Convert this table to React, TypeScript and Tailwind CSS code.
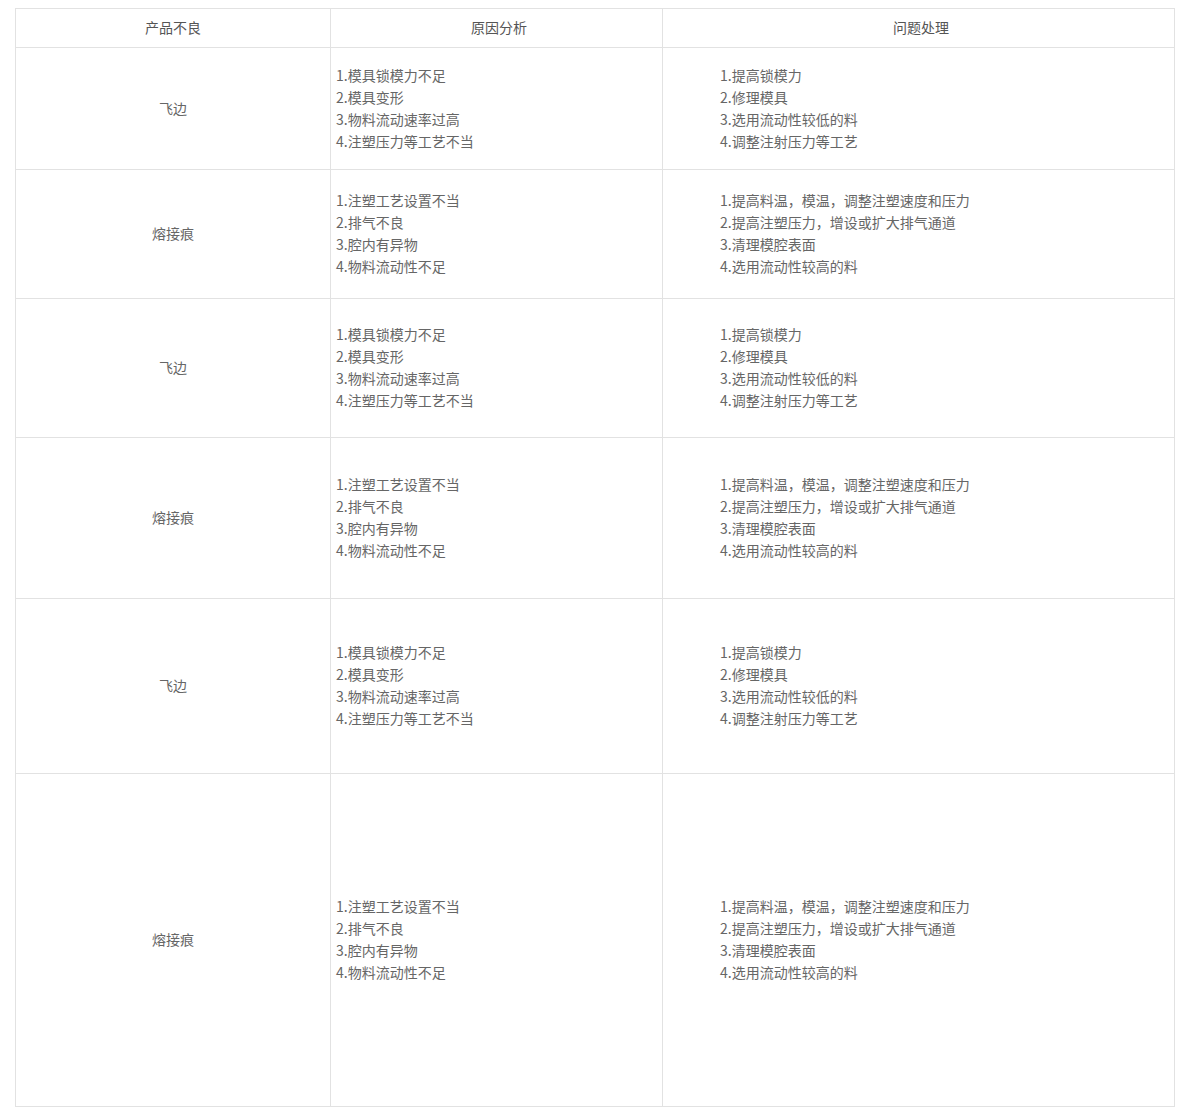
import React from "react";

const causeA = ["1.模具锁模力不足", "2.模具变形", "3.物料流动速率过高", "4.注塑压力等工艺不当"];
const fixA = ["1.提高锁模力", "2.修理模具", "3.选用流动性较低的料", "4.调整注射压力等工艺"];
const causeB = ["1.注塑工艺设置不当", "2.排气不良", "3.腔内有异物", "4.物料流动性不足"];
const fixB = ["1.提高料温，模温，调整注塑速度和压力", "2.提高注塑压力，增设或扩大排气通道", "3.清理模腔表面", "4.选用流动性较高的料"];

const rows: { name: string; cause: string[]; fix: string[]; h: string }[] = [
  { name: "飞边", cause: causeA, fix: fixA, h: "h-[122px]" },
  { name: "熔接痕", cause: causeB, fix: fixB, h: "h-[129px]" },
  { name: "飞边", cause: causeA, fix: fixA, h: "h-[139px]" },
  { name: "熔接痕", cause: causeB, fix: fixB, h: "h-[161px]" },
  { name: "飞边", cause: causeA, fix: fixA, h: "h-[175px]" },
  { name: "熔接痕", cause: causeB, fix: fixB, h: "h-[333px]" },
];

export default function App() {
  return (
    <div className="bg-white min-h-[1117px] pt-[8px] pl-[15px] text-[14px] leading-[22px] text-[#666]" style={{ fontFamily: '"Microsoft YaHei", "Noto Sans CJK SC", sans-serif' }}>
      <table className="border-collapse w-[1159px] table-fixed">
        <colgroup>
          <col className="w-[315px]" />
          <col className="w-[332px]" />
          <col className="w-[512px]" />
        </colgroup>
        <thead>
          <tr className="h-[39px]">
            <th className="border border-[#e2e2e2] font-normal text-center text-[#555] pt-0 pb-[3px] px-0">产品不良</th>
            <th className="border border-[#e2e2e2] font-normal text-center text-[#555] pt-0 pb-[3px] pl-[5px] pr-0">原因分析</th>
            <th className="border border-[#e2e2e2] font-normal text-center text-[#555] pt-0 pb-[3px] pl-[5px] pr-0">问题处理</th>
          </tr>
        </thead>
        <tbody>
          {rows.map((r, i) => (
            <tr key={i} className={r.h}>
              <td className="border border-[#e2e2e2] text-center align-middle pt-0 pb-[2px] px-0">{r.name}</td>
              <td className="border border-[#e2e2e2] align-middle pl-[5px] pt-0 pb-[2px]">
                {r.cause.map((c, j) => (
                  <div key={j}>{c}</div>
                ))}
              </td>
              <td className="border border-[#e2e2e2] align-middle pl-[57px] pt-0 pb-[2px]">
                {r.fix.map((c, j) => (
                  <div key={j}>{c}</div>
                ))}
              </td>
            </tr>
          ))}
        </tbody>
      </table>
    </div>
  );
}
